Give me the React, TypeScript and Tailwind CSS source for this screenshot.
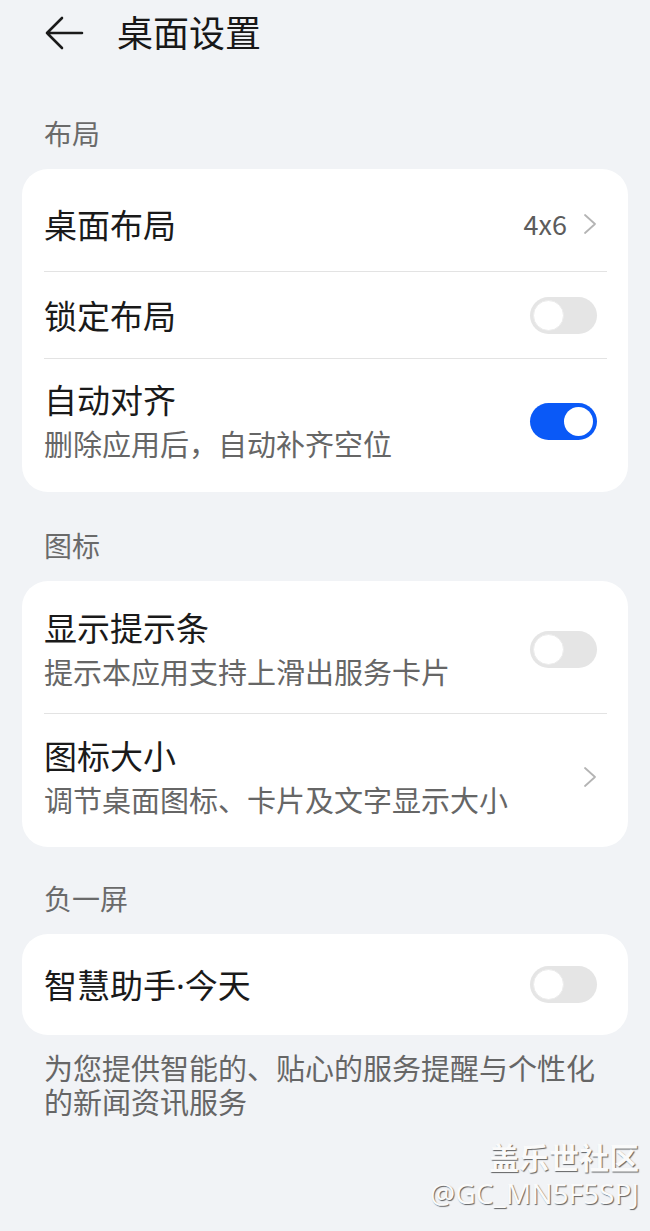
import React from "react";

const FONT = "font-['Noto_Sans_CJK_SC','Noto_Sans',sans-serif]";

function Toggle({ on }: { on?: boolean }) {
  return on ? (
    <div className="mr-[10px] flex h-[37px] w-[67px] shrink-0 items-center justify-end rounded-full bg-[#0a59f7] px-[4px]">
      <div className="h-[29px] w-[29px] rounded-full bg-white" />
    </div>
  ) : (
    <div className="mr-[10px] flex h-[37px] w-[67px] shrink-0 items-center rounded-full bg-[#e5e5e5] px-[3px]">
      <div className="h-[31px] w-[31px] rounded-full border border-[#ececec] bg-white" />
    </div>
  );
}

function Chevron() {
  return (
    <svg width="14" height="22" viewBox="0 0 14 22" className="mr-[10px] shrink-0">
      <path d="M2 2 L12 11 L2 20" fill="none" stroke="#b4b4b4" strokeWidth="1.8" strokeLinecap="round" strokeLinejoin="round" />
    </svg>
  );
}

function Divider() {
  return <div className="h-px bg-[#e3e3e3]" />;
}

function SectionLabel({ children, pt }: { children: React.ReactNode; pt: string }) {
  return (
    <div className={`${pt} pb-[19px] px-[44px] text-[28px] leading-[34px] text-[#6a6a6a]`}>{children}</div>
  );
}

export default function App() {
  return (
    <div className={`${FONT} relative min-h-[1231px] w-full bg-[#f1f3f6]`}>
      {/* header */}
      <div className="flex h-[62px] items-center">
        <svg width="40" height="36" viewBox="0 0 40 36" className="ml-[45px] mt-[4px] shrink-0">
          <path d="M17 3 L2 18 L17 33 M2 18 L37 18" fill="none" stroke="#1a1a1a" strokeWidth="2.6" strokeLinecap="round" strokeLinejoin="round" />
        </svg>
        <div className="ml-[32px] text-[36px] leading-[44px] text-[#181818]">桌面设置</div>
      </div>

      <SectionLabel pt="pt-[54px]">布局</SectionLabel>
      <div className="mx-[22px] rounded-[26px] bg-white px-[22px] pr-[21px]">
        <div className="flex h-[102px] items-center pt-[7px]">
          <div className="flex-1 text-[33px] leading-[44px] text-[#1a1a1a]">桌面布局</div>
          <div className="mr-[16px] text-[27px] leading-[34px] text-[#5c5c5c]">4x6</div>
          <Chevron />
        </div>
        <Divider />
        <div className="flex h-[86px] items-center">
          <div className="flex-1 text-[33px] leading-[44px] text-[#1a1a1a]">锁定布局</div>
          <Toggle />
        </div>
        <Divider />
        <div className="flex items-center pt-[18px] pb-[27px]">
          <div className="flex-1">
            <div className="text-[33px] leading-[44px] text-[#1a1a1a]">自动对齐</div>
            <div className="text-[29px] leading-[44px] text-[#666666]">删除应用后，自动补齐空位</div>
          </div>
          <Toggle on />
        </div>
      </div>

      <SectionLabel pt="pt-[36px]">图标</SectionLabel>
      <div className="mx-[22px] rounded-[26px] bg-white px-[22px] pr-[21px]">
        <div className="flex items-center pt-[24px] pb-[20px]">
          <div className="flex-1">
            <div className="text-[33px] leading-[44px] text-[#1a1a1a]">显示提示条</div>
            <div className="text-[29px] leading-[44px] text-[#666666]">提示本应用支持上滑出服务卡片</div>
          </div>
          <Toggle />
        </div>
        <Divider />
        <div className="flex items-center pt-[19px] pb-[26px]">
          <div className="flex-1">
            <div className="text-[33px] leading-[44px] text-[#1a1a1a]">图标大小</div>
            <div className="text-[29px] leading-[44px] text-[#666666]">调节桌面图标、卡片及文字显示大小</div>
          </div>
          <Chevron />
        </div>
      </div>

      <SectionLabel pt="pt-[34px]">负一屏</SectionLabel>
      <div className="mx-[22px] rounded-[26px] bg-white px-[22px] pr-[21px]">
        <div className="flex h-[101px] items-center">
          <div className="flex-1 text-[33px] leading-[44px] text-[#1a1a1a]">
            智慧助手<span className="font-['Noto_Sans',sans-serif]">·</span>今天
          </div>
          <Toggle />
        </div>
      </div>

      <div className="px-[44px] pt-[15px] pr-[40px] text-[29px] leading-[34px] text-[#666666]">
        为您提供智能的、贴心的服务提醒与个性化的新闻资讯服务
      </div>

      {/* watermark */}
      <div className="absolute right-[11px] top-[1137px] flex flex-col items-end text-[#fafafa]">
        <div className="text-[30px] font-bold leading-[38px] [text-shadow:1px_1px_1px_rgba(0,0,0,0.6)]">盖乐世社区</div>
        <div className="font-['Noto_Sans',sans-serif] text-[28px] leading-[36px] [text-shadow:1px_1px_1px_rgba(0,0,0,0.6)]">@GC_MN5F5SPJ</div>
      </div>
    </div>
  );
}
